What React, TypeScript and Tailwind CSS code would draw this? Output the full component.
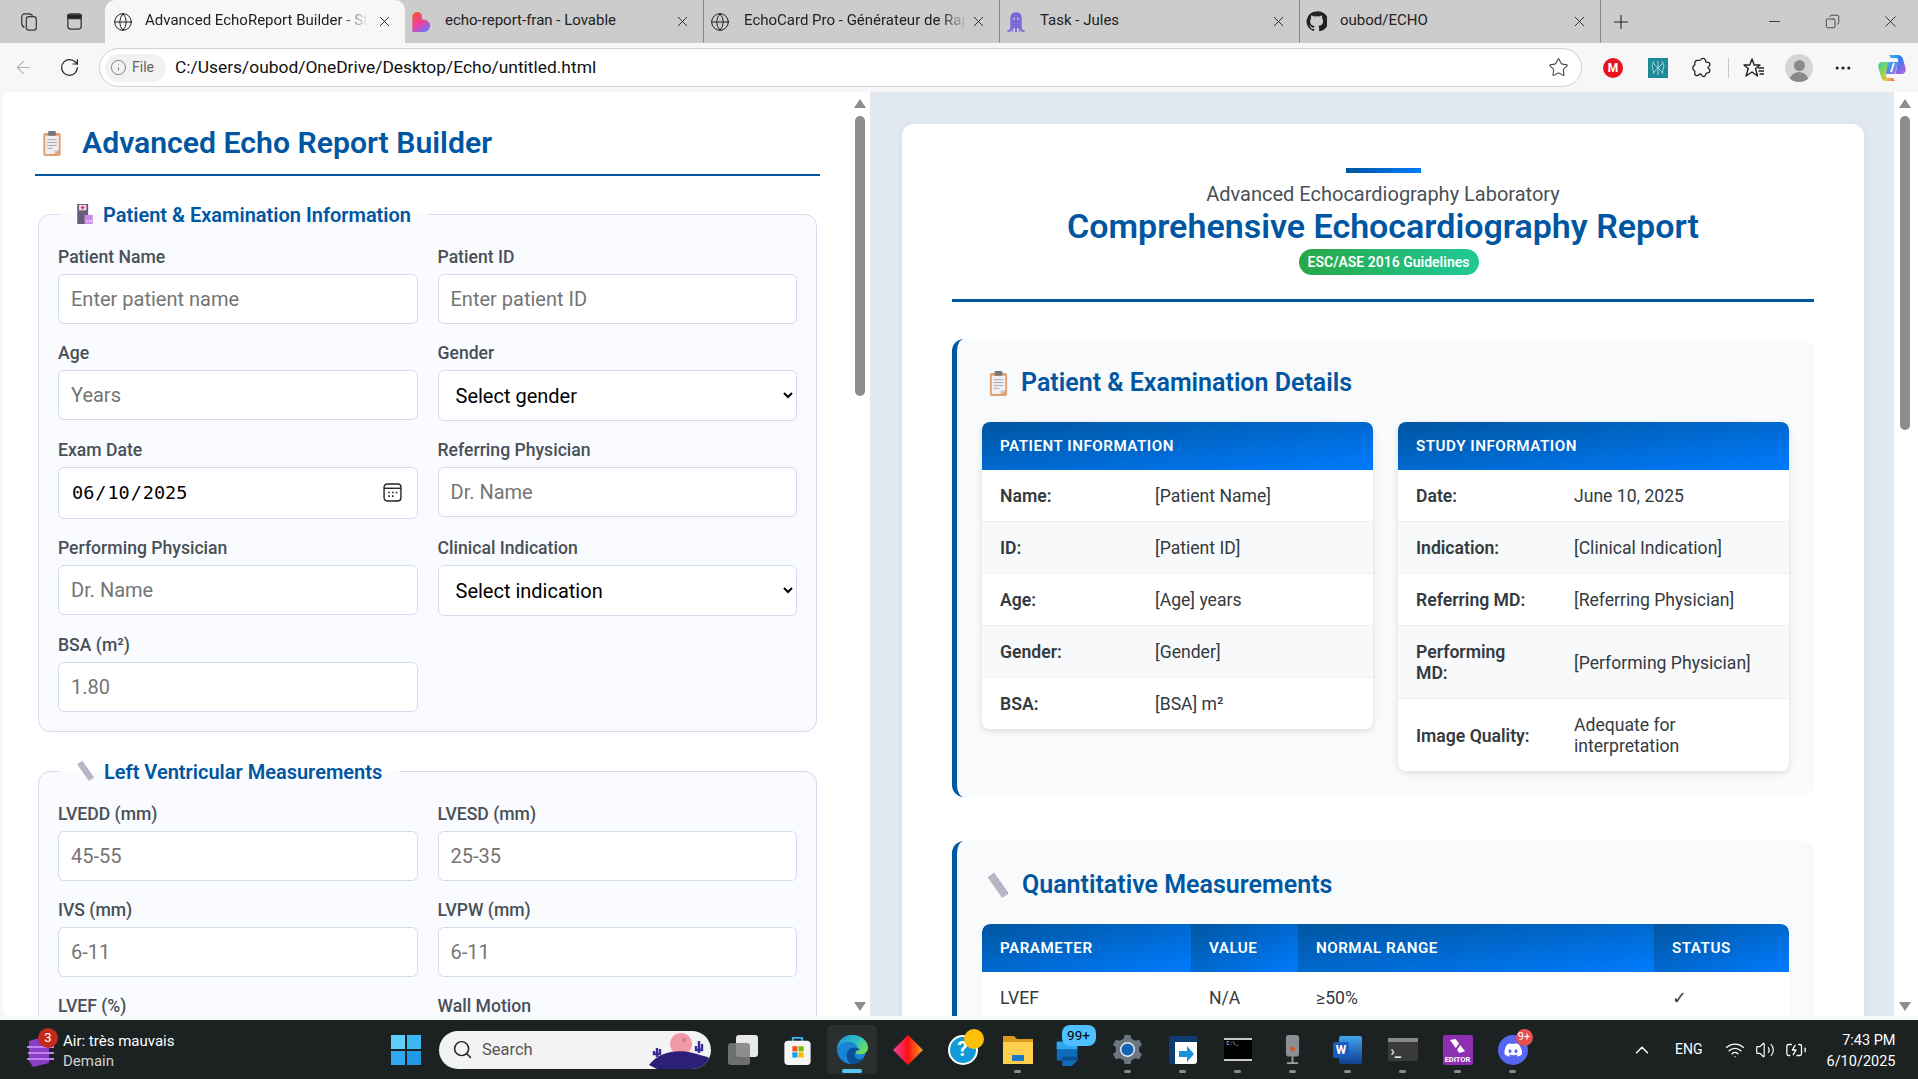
import { Globe, X, Plus, Minus, Copy, ArrowLeft, RotateCw, Info, Star, MoreHorizontal, Search, ChevronUp, Wifi, Volume2, BatteryCharging } from "lucide-react";
import type { ReactNode } from "react";

const font = { fontFamily: "Roboto, sans-serif" };
const monoFont = { fontFamily: '"DejaVu Sans Mono", monospace' };

function ClipboardIcon({ className = "" }: { className?: string }) {
  return (
    <svg viewBox="0 0 20 26" className={className}>
      <rect x="1" y="2" width="18" height="24" rx="2" fill="#e0a070" />
      <path d="M3 5h14v15l-5 4H3z" fill="#f0f0f4" />
      <path d="M12 24l5-4h-5z" fill="#cfcfd6" />
      <rect x="6" y="0" width="8" height="5" rx="1" fill="#77787c" />
      <path d="M5 9h10M5 12h10M5 15h10M5 18h6" stroke="#a5a6ae" strokeWidth="1" />
    </svg>
  );
}

function HospitalIcon({ className = "" }: { className?: string }) {
  return (
    <svg viewBox="0 0 18 22" className={className}>
      <rect x="1" y="0" width="12" height="22" fill="#6b5b7b" />
      <rect x="3" y="1" width="8" height="6" fill="#e8e4ee" />
      <path d="M7 2v4M5 4h4" stroke="#e0286e" strokeWidth="1.4" />
      <rect x="9" y="12" width="9" height="10" fill="#c88ae6" />
      <path d="M11 19h1M14 19h1M16 19h1" stroke="#fff" strokeWidth="2" />
    </svg>
  );
}

function RulerIcon({ className = "" }: { className?: string }) {
  return (
    <svg viewBox="0 0 22 24" className={className}>
      <path d="M1 4l6-4 14 20-6 4z" fill="#b9b5c4" />
      <path d="M7 0l14 20" stroke="#8d7fd0" strokeWidth="1.2" strokeDasharray="1 1.5" />
    </svg>
  );
}

function Tab({ icon, title, active, fade }: { icon: ReactNode; title: string; active?: boolean; fade?: boolean }) {
  return (
    <div className={active ? "flex h-[43px] w-[300px] items-center rounded-t-[10px] bg-[#f7f7f7] pl-[8px] pr-[12px]" : "flex h-[43px] flex-1 items-center pl-[6px] pr-[12px]"}>
      <div className={active ? "flex w-[32px] shrink-0 items-center" : "flex w-[34px] shrink-0 items-center"}>{icon}</div>
      <div className={fade ? "w-[223px] overflow-hidden whitespace-nowrap pb-[2px] text-[15px] text-[#222] [mask-image:linear-gradient(to_right,black_88%,transparent)]" : "w-[223px] overflow-hidden whitespace-nowrap pb-[2px] text-[15px] text-[#222]"}>{title}</div>
      <X className="ml-auto h-[17px] w-[17px] shrink-0 text-[#222]" strokeWidth={1.3} />
    </div>
  );
}

function TabBar() {
  return (
    <div className="flex h-[43px] items-center bg-[#cccccc]">
      <div className="flex w-[105px] shrink-0 items-center pl-[19px]">
        <svg viewBox="0 0 20 22" className="h-[20px] w-[20px]" fill="none" stroke="#333" strokeWidth="1.3">
          <rect x="7" y="5" width="11" height="15" rx="3" />
          <path d="M5 17c-2-1-3-3-3-5V6c0-2 1-4 3-4h5c2 0 3 1 4 2" />
        </svg>
        <svg viewBox="0 0 20 20" className="ml-[26px] h-[19px] w-[19px]" fill="none" stroke="#333" strokeWidth="1.3">
          <rect x="3" y="2" width="14" height="16" rx="3" />
          <path d="M3 3h14v4H3z" fill="#222" />
        </svg>
      </div>
      <Tab active fade title="Advanced EchoReport Builder - St" icon={<Globe className="h-[20px] w-[20px] text-[#222]" strokeWidth={1.2} />} />
      <div className="flex w-[299px] shrink-0 border-r border-[#8a8a8a]">
        <Tab
          title="echo-report-fran - Lovable"
          icon={
            <svg viewBox="0 0 20 22" className="h-[21px] w-[20px]">
              <defs>
                <linearGradient id="lov" x1="0" y1="0" x2="0.6" y2="1">
                  <stop offset="0" stopColor="#f9562a" />
                  <stop offset="0.6" stopColor="#f0409a" />
                  <stop offset="1" stopColor="#7c6cf2" />
                </linearGradient>
              </defs>
              <path d="M1 6a5 5 0 0 1 10 0v3h2a6 6 0 0 1 0 13H1z" fill="url(#lov)" />
            </svg>
          }
        />
      </div>
      <div className="flex w-[296px] shrink-0 border-r border-[#8a8a8a]">
        <Tab fade title="EchoCard Pro - Générateur de Rap" icon={<Globe className="h-[20px] w-[20px] text-[#222]" strokeWidth={1.2} />} />
      </div>
      <div className="flex w-[300px] shrink-0 border-r border-[#8a8a8a]">
        <Tab
          title="Task - Jules"
          icon={
            <svg viewBox="0 0 20 24" className="h-[23px] w-[20px]">
              <path d="M4 8a6 6 0 0 1 12 0v10c0 2 1 3 3 3v2c-3 0-4-1-5-3v3h-1v-4h-2v4H9v-4H7v4H6v-3c-1 2-2 3-5 3v-2c2 0 3-1 3-3z" fill="#7c6cd8" />
              <circle cx="8" cy="9" r="1" fill="#cccccc" />
              <circle cx="12" cy="9" r="1" fill="#cccccc" />
            </svg>
          }
        />
      </div>
      <div className="flex w-[301px] shrink-0 border-r border-[#8a8a8a]">
        <Tab
          title="oubod/ECHO"
          icon={
            <svg viewBox="0 0 24 24" className="h-[21px] w-[21px]" fill="#222">
              <path d="M12 .5a11.5 11.5 0 0 0-3.6 22.4c.6.1.8-.3.8-.6v-2c-3.200.7-3.900-1.400-3.900-1.400-.5-1.300-1.300-1.700-1.300-1.700-1-.7.100-.7.100-.7 1.200.1 1.800 1.200 1.800 1.200 1 1.800 2.700 1.300 3.400 1 .1-.8.400-1.300.700-1.600-2.600-.3-5.300-1.300-5.300-5.700 0-1.300.5-2.300 1.200-3.100-.1-.3-.5-1.500.1-3.100 0 0 1-.3 3.200 1.200a11 11 0 0 1 5.800 0c2.200-1.500 3.200-1.200 3.200-1.200.6 1.600.2 2.800.1 3.100.8.800 1.200 1.800 1.200 3.100 0 4.400-2.700 5.400-5.300 5.700.4.400.8 1.100.8 2.200v3.300c0 .3.200.7.800.6A11.500 11.500 0 0 0 12 .5z" />
            </svg>
          }
        />
      </div>
      <Plus className="ml-[9px] h-[22px] w-[22px] text-[#222]" strokeWidth={1.2} />
      <Minus className="ml-[134px] h-[17px] w-[17px] text-[#222]" strokeWidth={1.2} />
      <Copy className="ml-[42px] h-[15px] w-[15px] -scale-x-100 text-[#222]" strokeWidth={1.2} />
      <X className="ml-[41px] h-[19px] w-[19px] text-[#222]" strokeWidth={1.1} />
    </div>
  );
}

function AddressBar() {
  return (
    <div className="flex h-[49px] items-center bg-[#f7f7f7]">
      <ArrowLeft className="ml-[13px] h-[21px] w-[21px] text-[#b4b4b4]" strokeWidth={1.3} />
      <RotateCw className="ml-[25px] h-[21px] w-[21px] text-[#222]" strokeWidth={1.4} />
      <div className="ml-[19px] flex h-[39px] w-[1483px] items-center rounded-[20px] border border-[#d0d0d0] bg-white pl-[5px] pr-[12px]">
        <div className="flex h-[28px] w-[61px] items-center rounded-[14px] bg-[#f2f2f2] pl-[5px] text-[14px] text-[#666]">
          <Info className="mr-[5px] h-[17px] w-[17px] text-[#777]" strokeWidth={1.3} />
          File
        </div>
        <div className="ml-[9px] text-[17.4px] text-[#111]">C:/Users/oubod/OneDrive/Desktop/Echo/untitled.html</div>
        <Star className="ml-auto h-[21px] w-[21px] text-[#444]" strokeWidth={1.2} />
      </div>
      <div className="ml-[21px] flex h-[20px] w-[20px] items-center justify-center rounded-full bg-[#e8141c] text-[12px] font-bold text-white">M</div>
      <svg viewBox="0 0 20 20" className="ml-[25px] h-[20px] w-[20px]">
        <rect width="20" height="20" fill="#1f8a96" />
        <path d="M10 3v14M5 5l10 10M15 5L5 15M6 3l-2 5 2 8M14 3l2 5-2 8" stroke="#b8e6ea" strokeWidth="0.8" fill="none" />
      </svg>
      <svg viewBox="0 0 22 22" className="ml-[24px] h-[21px] w-[21px]" fill="none" stroke="#222" strokeWidth="1.4">
        <path d="M9 3c1-2 4-2 5 0 .5 1 0 2 1 2.500 1 .5 2-.5 3 .5 1 1 1 3-.5 4-1 .6-1 1.500 0 2 1.500 1 1.500 3 .5 4s-2 .5-3 1-.5 2-1.500 3c-1 .8-3 .5-3.500-1-.3-1-1-1.500-2-1s-1.500 2-3.500 1.500c-1.500-.5-2-2-1.500-3.500.3-1-.2-1.500-1-2C.5 12.500.5 10 2 9c1-.6 1.500-1.500 1-2.500C2.700 5 4 3.500 5.500 3.500 7 3.500 8 4 9 3z" />
      </svg>
      <div className="ml-[15px] h-[20px] w-px bg-[#c8c8c8]" />
      <svg viewBox="0 0 22 22" className="ml-[14px] h-[22px] w-[22px]" fill="none" stroke="#222" strokeWidth="1.4">
        <path d="M9 2l2.200 6H17l-4.500 3.500L14.500 19 9 15l-6 4 2.300-7.500L1 8h5.800z" strokeLinejoin="round" />
        <path d="M15 11h6M15.500 14h5.500M16.500 17H21" />
      </svg>
      <div className="ml-[20px] flex h-[28px] w-[28px] flex-col items-center justify-end overflow-hidden rounded-full bg-[#d5d5d5]">
        <div className="h-[11px] w-[11px] rounded-full bg-[#8a8a88]" />
        <div className="mt-[1px] h-[10px] w-[20px] rounded-t-full bg-[#8a8a88]" />
      </div>
      <MoreHorizontal className="ml-[20px] h-[20px] w-[20px] text-[#222]" strokeWidth={1.8} />
      <svg viewBox="0 0 28 26" className="ml-[25px] h-[26px] w-[28px]">
        <defs>
          <linearGradient id="cop1" x1="0" y1="0" x2="1" y2="1">
            <stop offset="0" stopColor="#2fb6f0" />
            <stop offset="0.45" stopColor="#3a7cf0" />
            <stop offset="1" stopColor="#c85ce0" />
          </linearGradient>
          <linearGradient id="cop2" x1="0" y1="0" x2="1" y2="1">
            <stop offset="0" stopColor="#35c8b0" />
            <stop offset="0.45" stopColor="#9ad84a" />
            <stop offset="0.75" stopColor="#f8b83c" />
            <stop offset="1" stopColor="#f0588a" />
          </linearGradient>
        </defs>
        <path d="M11 0h9c2.500 0 4 1.500 5 4l2.500 9c1 3.500-1 6-4 6h-6L20 7c.5-2.500-.5-4-2-4h-5z" fill="url(#cop1)" />
        <path d="M17 26H8c-2.500 0-4-1.500-5-4L.5 13c-1-3.500 1-6 4-6h6L8 19c-.5 2.500.5 4 2 4h5z" fill="url(#cop2)" />
        <path d="M10 7h10l-3 12H8z" fill="url(#cop1)" opacity="0.9" />
        <path d="M16 8l-3 9" stroke="#fff" strokeWidth="1.8" />
      </svg>
    </div>
  );
}

function Field({ label, children }: { label: string; children: ReactNode }) {
  return (
    <div>
      <label className="mb-[5px] block text-[17.6px] font-medium leading-6 text-[#495057]">{label}</label>
      {children}
    </div>
  );
}

const inputCls = "block h-[50px] w-full rounded-[6px] border border-[#d3dcec] bg-white px-[12px] text-[20px] text-[#222] placeholder:text-[#757575]";
const selectCls = "block h-[51px] w-full rounded-[6px] border border-[#d3dcec] bg-white pl-[13px] pr-[12px] text-[20px] text-black";

function TextField({ label, placeholder }: { label: string; placeholder: string }) {
  return (
    <Field label={label}>
      <input className={inputCls} placeholder={placeholder} style={font} />
    </Field>
  );
}

function SelectField({ label, text }: { label: string; text: string }) {
  return (
    <Field label={label}>
      <select className={selectCls} style={font}>
        <option>{text}</option>
      </select>
    </Field>
  );
}

function Group({ icon, title, children }: { icon: ReactNode; title: string; children: ReactNode }) {
  return (
    <fieldset className="mx-[3px] rounded-[12px] border border-[#d3dcec] bg-[#f9fbff] px-[19px] pb-[19px]">
      <legend className="ml-[1px] flex h-[24px] items-center px-[17px] text-[20px] font-semibold leading-6 text-[#0056a0]">
        {icon}
        <span className="mt-[2px]">{title}</span>
      </legend>
      <div className="mt-[19px] grid grid-cols-2 gap-x-[20px] gap-y-[17px]">{children}</div>
    </fieldset>
  );
}

function Builder() {
  return (
    <div className="h-full w-[849px] shrink-0 overflow-hidden rounded-l-[8px] bg-white px-[32px]">
      <div className="flex h-[84px] items-center border-b-2 border-[#0056a0] pt-[20px]">
        <ClipboardIcon className="ml-[7px] h-[25px] w-[20px]" />
        <h1 className="ml-[20px] text-[30.2px] font-semibold text-[#0056a0]">Advanced Echo Report Builder</h1>
      </div>
      <div className="mt-[26px]">
        <Group icon={<HospitalIcon className="mr-[10px] h-[20px] w-[17px]" />} title="Patient & Examination Information">
          <TextField label="Patient Name" placeholder="Enter patient name" />
          <TextField label="Patient ID" placeholder="Enter patient ID" />
          <TextField label="Age" placeholder="Years" />
          <SelectField label="Gender" text="Select gender" />
          <Field label="Exam Date">
            <div className="relative">
              <input type="date" defaultValue="2025-06-10" className="block h-[52px] w-full rounded-[6px] border border-[#d3dcec] bg-white px-[12px] text-[18.5px] text-black [&::-webkit-calendar-picker-indicator]:opacity-0" style={monoFont} />
              <svg viewBox="0 0 18 18" className="pointer-events-none absolute left-[325px] top-[16px] h-[19px] w-[19px]" fill="none" stroke="#222" strokeWidth="1.3">
                <rect x="1" y="1" width="16" height="16" rx="3" />
                <path d="M1 5h16" />
                <path d="M5 9h1.500M8.500 9H10M12 9h1.500M5 12.500h1.500M8.500 12.500H10" strokeWidth="1.600" />
              </svg>
            </div>
          </Field>
          <TextField label="Referring Physician" placeholder="Dr. Name" />
          <TextField label="Performing Physician" placeholder="Dr. Name" />
          <SelectField label="Clinical Indication" text="Select indication" />
          <TextField label="BSA (m²)" placeholder="1.80" />
        </Group>
      </div>
      <div className="mt-[27px]">
        <Group icon={<RulerIcon className="mr-[9px] h-[20px] w-[19px]" />} title="Left Ventricular Measurements">
          <TextField label="LVEDD (mm)" placeholder="45-55" />
          <TextField label="LVESD (mm)" placeholder="25-35" />
          <TextField label="IVS (mm)" placeholder="6-11" />
          <TextField label="LVPW (mm)" placeholder="6-11" />
          <TextField label="LVEF (%)" placeholder="55-70" />
          <TextField label="Wall Motion" placeholder="Normal" />
        </Group>
      </div>
    </div>
  );
}

function InfoCard({ title, col, rows }: { title: string; col: string; rows: [string, string][] }) {
  return (
    <div className="self-start overflow-hidden rounded-[8px] bg-white shadow-[0_2px_6px_rgba(0,0,0,0.12)]">
      <div className="flex h-[48px] items-center bg-gradient-to-br from-[#0056a0] to-[#007bff] px-[18px] text-[15.2px] font-semibold tracking-[0.5px] text-white">{title}</div>
      {rows.map(([k, v], i) => (
        <div key={k} className={`${col} grid items-center border-[#eef0f3] px-[18px] pb-[14px] pt-[16px] text-[17.6px] leading-[21px] text-[#343a40] ${i < rows.length - 1 ? "border-b" : ""} ${i % 2 === 1 ? "bg-[#f8f9fa]" : "bg-white"}`}>
          <div className="pr-[36px] font-semibold">{k}</div>
          <div>{v}</div>
        </div>
      ))}
    </div>
  );
}

function Section({ icon, title, children }: { icon: ReactNode; title: string; children: ReactNode }) {
  return (
    <section className="rounded-[12px] border-l-[5px] border-[#0056a0] bg-[#f8fafc] px-[25px] pb-[26px] pt-[30px]">
      <h2 className="mb-[25px] flex h-[28px] items-center text-[25px] font-semibold text-[#0056a0]">
        {icon}
        {title}
      </h2>
      {children}
    </section>
  );
}

function Th({ w, children }: { w: string; children: string }) {
  return <th className={`${w} h-[48px] bg-gradient-to-br from-[#0056a0] to-[#007bff] px-[18px] text-left text-[15.2px] font-semibold tracking-[0.5px] text-white`}>{children}</th>;
}

function Report() {
  return (
    <div className="flex-1 overflow-hidden bg-[#e2e8f0] pl-[32px] pr-[30px] pt-[32px]">
      <div className="h-[1000px] rounded-t-[12px] bg-white px-[50px] shadow-[0_2px_10px_rgba(0,0,0,0.06)]">
        <div className="flex h-[178px] flex-col items-center border-b-[3px] border-[#0056a0] pt-[44px]">
          <div className="h-[5px] w-[75px] bg-gradient-to-r from-[#0056a0] to-[#007bff]" />
          <div className="mt-[9px] text-[20px] leading-[24px] text-[#495057]">Advanced Echocardiography Laboratory</div>
          <div className="text-[34px] font-semibold leading-[41px] text-[#0056a0]">Comprehensive Echocardiography Report</div>
          <div className="ml-[11px] mt-[2px] flex h-[26px] w-[180px] items-center justify-center rounded-full bg-gradient-to-r from-[#28a745] to-[#20c997] text-[14px] font-semibold text-white">ESC/ASE 2016 Guidelines</div>
        </div>
        <div className="mt-[37px]">
          <Section icon={<ClipboardIcon className="ml-[6px] mr-[12px] h-[25px] w-[21px]" />} title="Patient & Examination Details">
            <div className="grid grid-cols-2 gap-[25px]">
              <InfoCard
                title="PATIENT INFORMATION"
                col="grid-cols-[155px_1fr]"
                rows={[
                  ["Name:", "[Patient Name]"],
                  ["ID:", "[Patient ID]"],
                  ["Age:", "[Age] years"],
                  ["Gender:", "[Gender]"],
                  ["BSA:", "[BSA] m²"],
                ]}
              />
              <InfoCard
                title="STUDY INFORMATION"
                col="grid-cols-[158px_1fr]"
                rows={[
                  ["Date:", "June 10, 2025"],
                  ["Indication:", "[Clinical Indication]"],
                  ["Referring MD:", "[Referring Physician]"],
                  ["Performing MD:", "[Performing Physician]"],
                  ["Image Quality:", "Adequate for interpretation"],
                ]}
              />
            </div>
          </Section>
        </div>
        <div className="mt-[44px]">
          <Section icon={<RulerIcon className="ml-[3px] mr-[11px] h-[25px] w-[26px]" />} title="Quantitative Measurements">
            <table className="w-full table-fixed overflow-hidden rounded-t-[8px] bg-white">
              <thead>
                <tr>
                  <Th w="w-[209px] rounded-tl-[8px]">PARAMETER</Th>
                  <Th w="w-[107px]">VALUE</Th>
                  <Th w="w-[356px]">NORMAL RANGE</Th>
                  <Th w="rounded-tr-[8px]">STATUS</Th>
                </tr>
              </thead>
              <tbody>
                <tr className="h-[52px] text-[17.6px] text-[#343a40]">
                  <td className="px-[18px]">LVEF</td>
                  <td className="px-[18px]">N/A</td>
                  <td className="px-[18px]">≥50%</td>
                  <td className="px-[18px]">✓</td>
                </tr>
              </tbody>
            </table>
          </Section>
        </div>
      </div>
    </div>
  );
}

function ScrollBar({ w, thumb, bg }: { w: string; thumb: string; bg: string }) {
  return (
    <div className={`${w} ${bg} flex h-full shrink-0 flex-col items-center overflow-hidden pr-[2px]`}>
      <div className="mt-[7px] h-0 w-0 border-x-[6px] border-b-[9px] border-x-transparent border-b-[#8d8d8d]" />
      <div className={`${thumb} mt-[8px] w-[10px] rounded-full bg-[#8d8d8d]`} />
      <div className="mb-[5px] mt-auto h-0 w-0 border-x-[6px] border-t-[9px] border-x-transparent border-t-[#8d8d8d]" />
    </div>
  );
}

function TaskIcon({ children, dot, active }: { children: ReactNode; dot?: boolean; active?: boolean }) {
  return (
    <div className="relative flex h-[59px] w-[55px] shrink-0 items-center justify-center">
      {active && <div className="absolute left-[2px] top-[5px] h-[49px] w-[50px] rounded-[5px] bg-[#2a302f]" />}
      <div className="relative flex items-center justify-center">{children}</div>
      {dot && <div className="absolute bottom-[6px] left-[24px] h-[3px] w-[7px] rounded-full bg-[#8a8a8a]" />}
      {active && <div className="absolute bottom-[6px] left-[17px] h-[4px] w-[20px] rounded-full bg-[#5cc4f5]" />}
    </div>
  );
}

function Taskbar() {
  return (
    <div className="flex h-[59px] items-center bg-[#1c2221] text-white">
      <div className="relative flex w-[378px] shrink-0 items-center pl-[27px]">
        <svg viewBox="0 0 28 34" className="h-[34px] w-[28px]">
          <path d="M2 8l20-6v28L6 34 2 28z" fill="#8a3ec8" />
          <path d="M0 14h27M1 20h26M0 26h27" stroke="#c080f0" strokeWidth="2" />
        </svg>
        <div className="absolute left-[38px] top-[-1px] flex h-[20px] w-[20px] items-center justify-center rounded-full bg-[#c42b1c] text-[13px]">3</div>
        <div className="ml-[8px] pt-[2px] text-[15px] leading-[20px]">
          <div>Air: très mauvais</div>
          <div className="text-[#d0d0d0]">Demain</div>
        </div>
      </div>
      <TaskIcon>
        <div className="grid h-[30px] w-[30px] grid-cols-2 gap-[2px]">
          <div className="bg-[#5fd0f8]" />
          <div className="bg-[#3cb8f4]" />
          <div className="bg-[#2ea8ee]" />
          <div className="bg-[#1f98e6]" />
        </div>
      </TaskIcon>
      <div className="ml-[6px] flex h-[38px] w-[272px] shrink-0 items-center overflow-hidden rounded-full bg-[#f3f3f3] pl-[13px] text-[16.5px] text-[#555]">
        <Search className="h-[21px] w-[21px] text-[#222]" strokeWidth={1.7} />
        <span className="ml-[9px] pt-[2px]">Search</span>
        <svg viewBox="0 0 62 38" className="ml-auto h-[38px] w-[62px]">
          <circle cx="32" cy="13" r="11" fill="#f09aa8" />
          <circle cx="35" cy="9" r="2" fill="#d87a8c" />
          <path d="M0 34c10-14 30-16 44-12s18 4 18 8c0 5-6 8-12 8H8z" fill="#2c1f78" />
          <path d="M8 26v-9M5 20v3h6v-5M50 22V10M47 15v4h6v-6" stroke="#3a2a9a" strokeWidth="2.4" fill="none" />
        </svg>
      </div>
      <div className="ml-[4px] flex">
        <TaskIcon>
          <div className="relative h-[30px] w-[30px]">
            <div className="absolute right-0 top-0 h-[22px] w-[22px] rounded-[3px] bg-[#e8e8e8]" />
            <div className="absolute bottom-0 left-0 h-[22px] w-[22px] rounded-[3px] bg-[#7d7d7d] opacity-85" />
          </div>
        </TaskIcon>
        <TaskIcon>
          <svg viewBox="0 0 28 32" className="h-[30px] w-[29px]">
            <path d="M9 7V3h10v4" stroke="#35b8f0" strokeWidth="2" fill="none" />
            <rect x="0" y="6" width="28" height="26" rx="4" fill="#f5f5f5" />
            <rect x="8.500" y="12" width="5.500" height="5.500" fill="#f25022" />
            <rect x="15" y="12" width="5.500" height="5.500" fill="#7fba00" />
            <rect x="8.500" y="18.500" width="5.500" height="5.500" fill="#00a4ef" />
            <rect x="15" y="18.500" width="5.500" height="5.500" fill="#ffb900" />
          </svg>
        </TaskIcon>
        <TaskIcon active>
          <svg viewBox="0 0 32 32" className="h-[31px] w-[31px]">
            <defs>
              <linearGradient id="edg" x1="0" y1="0" x2="1" y2="0.6">
                <stop offset="0" stopColor="#1a8fd8" />
                <stop offset="0.6" stopColor="#2fc0c0" />
                <stop offset="1" stopColor="#6fdc60" />
              </linearGradient>
            </defs>
            <circle cx="15" cy="16" r="15" fill="#1a84d4" />
            <path d="M0 15C1 6 8 1 16 1c9 0 16 6 16 13 0 5-4 7-8 7-3 0-5-1-5-2 0-2 2-2 2-5 0-3-4-6-9-6C6 8 2 11 0 15z" fill="url(#edg)" />
            <path d="M19 19c-2 3 0 7 4 7 1 0 3 0 4-1-3 4-7 6-11 6-3 0-6-4-6-9 0-5 4-8 8-8 3 0 5 1 6 3-2-1-4 0-5 2z" fill="#0c4f98" />
          </svg>
        </TaskIcon>
        <TaskIcon>
          <svg viewBox="0 0 30 30" className="h-[30px] w-[30px]">
            <defs>
              <linearGradient id="dia" x1="0" y1="0" x2="1" y2="0">
                <stop offset="0" stopColor="#f040b0" />
                <stop offset="0.5" stopColor="#ff1010" />
                <stop offset="1" stopColor="#f8a020" />
              </linearGradient>
            </defs>
            <path d="M15 0l15 15-15 15L0 15z" fill="url(#dia)" />
          </svg>
        </TaskIcon>
        <TaskIcon>
          <div className="relative h-[30px] w-[30px]">
            <div className="flex h-[30px] w-[30px] items-center justify-center rounded-full border-[2px] border-white bg-[#129ad8] text-[21px] font-bold text-white">?</div>
            <div className="absolute right-[-6px] top-[-6px] h-[20px] w-[20px] rounded-full bg-[#ffc107]" />
          </div>
        </TaskIcon>
        <TaskIcon dot>
          <svg viewBox="0 0 30 28" className="h-[28px] w-[30px]">
            <path d="M0 0h11l3 3h16v25H0z" fill="#d89a18" />
            <path d="M0 6h30v22H0z" fill="#ffd050" />
            <rect x="9" y="19" width="12" height="6" rx="1" fill="#1b78c8" />
          </svg>
        </TaskIcon>
        <TaskIcon>
          <div className="relative h-[32px] w-[32px]">
            <svg viewBox="0 0 32 32" className="absolute left-[-4px] top-[2px] h-[30px] w-[30px]">
              <path d="M4 6h22v20l-6 6H10v-6H4z" fill="#0f6cbd" />
              <path d="M4 6h22v8H4z" fill="#2ea8ee" />
              <path d="M10 22h16v4H10z" fill="#0a4e94" />
            </svg>
            <div className="absolute left-[5px] top-[-9px] flex h-[21px] w-[34px] items-center justify-center rounded-[8px] bg-[#4fc0ff] text-[13.5px] text-black">99+</div>
          </div>
        </TaskIcon>
        <TaskIcon dot>
          <svg viewBox="0 0 32 32" className="h-[31px] w-[31px]">
            <path d="M13 1h6l1 4 4 2 4-1 3 5-3 3v4l3 3-3 5-4-1-4 2-1 4h-6l-1-4-4-2-4 1-3-5 3-3v-4l-3-3 3-5 4 1 4-2z" fill="#6b7680" />
            <circle cx="16" cy="16" r="7" fill="#1264b4" stroke="#e8e8e8" strokeWidth="1.500" />
          </svg>
        </TaskIcon>
        <TaskIcon dot>
          <svg viewBox="0 0 28 28" className="h-[28px] w-[28px]">
            <rect width="28" height="28" rx="3" fill="#0c3c70" />
            <path d="M6 6h22v19a3 3 0 0 1-3 3H6z" fill="#fff" />
            <path d="M10 15h8v-5l7 8-7 8v-5h-8z" fill="#1b8fd8" />
          </svg>
        </TaskIcon>
        <TaskIcon dot>
          <div className="h-[23px] w-[28px] border-y-[2px] border-[#c8c8c8] bg-black pl-[3px] font-mono text-[5px] leading-[8px] text-white">C:\_</div>
        </TaskIcon>
        <TaskIcon dot>
          <svg viewBox="0 0 16 32" className="h-[30px] w-[15px]">
            <rect x="1" y="0" width="14" height="23" rx="3" fill="#8a8f94" />
            <circle cx="8" cy="15" r="2.500" fill="#e8502a" />
            <path d="M8 23v6M2 30h12" stroke="#a0a0a0" strokeWidth="2" />
          </svg>
        </TaskIcon>
        <TaskIcon dot>
          <div className="relative h-[28px] w-[29px]">
            <div className="absolute right-0 top-0 h-full w-[23px] rounded-[2px] bg-gradient-to-b from-[#41a5ee] to-[#103f91]" />
            <div className="absolute left-0 top-[6px] flex h-[16px] w-[16px] items-center justify-center rounded-[2px] bg-[#185abd] text-[12px] font-bold text-white">W</div>
          </div>
        </TaskIcon>
        <TaskIcon dot>
          <div className="h-[23px] w-[30px] rounded-[2px] bg-[#3a3a3a]">
            <div className="h-[4px] bg-[#888]" />
            <div className="pl-[3px] text-[14px] font-bold leading-[18px] text-[#e8e8e8]">›_</div>
          </div>
        </TaskIcon>
        <TaskIcon dot>
          <div className="flex h-[30px] w-[30px] flex-col items-center justify-end rounded-[2px] bg-[#8d2fb0] text-[7.5px] font-bold leading-[10px] text-white">
            <svg viewBox="0 0 20 18" className="h-[17px] w-[19px]">
              <path d="M2 2l10 14 6-2L8 1z" fill="#fff" />
              <path d="M16 1L6 16" stroke="#8d2fb0" strokeWidth="2" />
            </svg>
            EDITOR
          </div>
        </TaskIcon>
        <TaskIcon dot>
          <div className="relative flex h-[30px] w-[30px] items-center justify-center rounded-full bg-[#5865f2]">
            <svg viewBox="0 0 24 18" className="h-[14px] w-[18px]" fill="#fff">
              <path d="M20 2a19 19 0 0 0-5-2l-1 1a18 18 0 0 0-5 0L9 0a19 19 0 0 0-5 2C1 6 0 11 1 15a19 19 0 0 0 6 3l1-2-2-1 .5-.5c4 2 8 2 12 0l.5.5-2 1 1 2a19 19 0 0 0 6-3c.5-5-1-9-4-13zM8 13c-1 0-2-1-2-2.500S7 8 8 8s2 1 2 2.500S9 13 8 13zm8 0c-1 0-2-1-2-2.500S15 8 16 8s2 1 2 2.500-1 2.500-2 2.500z" />
            </svg>
            <div className="absolute right-[-5px] top-[-6px] flex h-[17px] w-[17px] items-center justify-center rounded-full bg-[#e85050] text-[11px]">9+</div>
          </div>
        </TaskIcon>
      </div>
      <ChevronUp className="ml-[91px] h-[22px] w-[22px]" strokeWidth={1.6} />
      <div className="ml-[22px] text-[14px]">ENG</div>
      <Wifi className="ml-[23px] h-[20px] w-[20px]" strokeWidth={1.6} />
      <Volume2 className="ml-[10px] h-[20px] w-[20px]" strokeWidth={1.4} />
      <BatteryCharging className="ml-[10px] h-[22px] w-[22px]" strokeWidth={1.4} />
      <div className="ml-[19px] pt-[2px] text-right text-[14.5px] leading-[21px]">
        <div>7:43 PM</div>
        <div>6/10/2025</div>
      </div>
    </div>
  );
}

export default function App() {
  return (
    <div className="flex h-[1079px] w-[1918px] flex-col overflow-hidden bg-[#f7f7f7]" style={font}>
      <TabBar />
      <AddressBar />
      <div className="flex h-[924px] pl-[3px]">
        <Builder />
        <ScrollBar w="w-[18px]" bg="bg-white" thumb="h-[280px]" />
        <Report />
        <ScrollBar w="w-[24px]" bg="bg-white" thumb="h-[314px]" />
      </div>
      <div className="h-[4px]" />
      <Taskbar />
    </div>
  );
}
